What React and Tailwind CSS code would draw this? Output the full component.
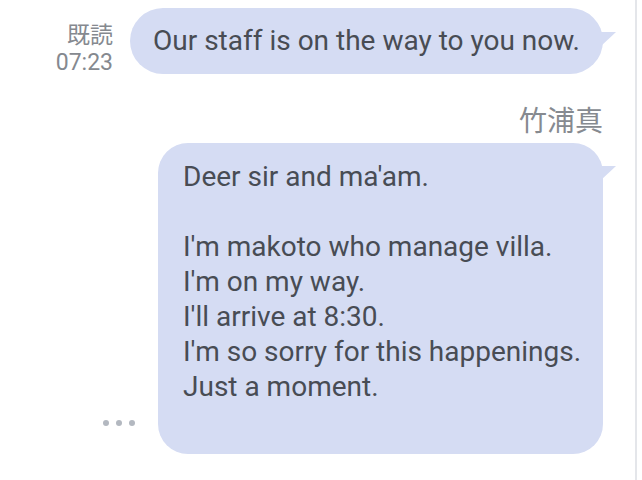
import React from "react";

const Tail = ({ top }) => (
  <svg
    className="absolute right-[-13px]"
    style={{ top }}
    width="16"
    height="16"
    viewBox="0 0 16 16"
  >
    <polygon points="0,0 16,0 0,15" fill="#d5dcf3" />
  </svg>
);

const lines = [
  "Deer sir and ma'am.",
  "",
  "I'm makoto who manage villa.",
  "I'm on my way.",
  "I'll arrive at 8:30.",
  "I'm so sorry for this happenings.",
  "Just a moment.",
];

const jp = { fontFamily: "'Noto Sans CJK JP', sans-serif" };

export default function App() {
  return (
    <div
      className="w-[642px] h-[480px] bg-white flex overflow-hidden"
      style={{ fontFamily: "Roboto, 'Noto Sans CJK JP', sans-serif" }}
    >
      <div className="flex-1 flex flex-col pt-[8px] pr-[32px]">
        {/* first message */}
        <div className="flex justify-end items-start gap-[17px]">
          <div className="mt-[10px] text-right text-[23px] text-[#85898f]">
            <div className="h-[30px] leading-[30px]" style={jp}>既読</div>
            <div className="h-[30px] leading-[30px]">07:23</div>
          </div>
          <div className="relative h-[66px] rounded-[33px] bg-[#d5dcf3] px-[23px] flex items-center text-[28px] text-[#484c54] whitespace-nowrap">
            Our staff is on the way to you now.
            <Tail top={24} />
          </div>
        </div>

        {/* sender */}
        <div
          className="mt-[26px] h-[30px] text-right text-[28px] leading-[30px] text-[#868a90]"
          style={jp}
        >
          竹浦真
        </div>

        {/* second message */}
        <div className="mt-[9px] flex justify-end items-end gap-[23px]">
          <div className="mb-[28px] flex gap-[7px]">
            <span className="w-[6px] h-[6px] rounded-full bg-[#b3b8c0]" />
            <span className="w-[6px] h-[6px] rounded-full bg-[#b3b8c0]" />
            <span className="w-[6px] h-[6px] rounded-full bg-[#b3b8c0]" />
          </div>
          <div className="relative w-[445px] rounded-[30px] bg-[#d5dcf3] pl-[25px] pr-[20px] pt-[16px] pb-[50px] text-[28px] leading-[35px] text-[#484c54]">
            {lines.map((l, i) => (
              <div key={i} className="h-[35px] whitespace-nowrap">
                {l}
              </div>
            ))}
            <Tail top={23} />
          </div>
        </div>
      </div>
      <div className="w-[2px] h-full bg-[#e4e6ea] mr-[5px]" />
    </div>
  );
}
